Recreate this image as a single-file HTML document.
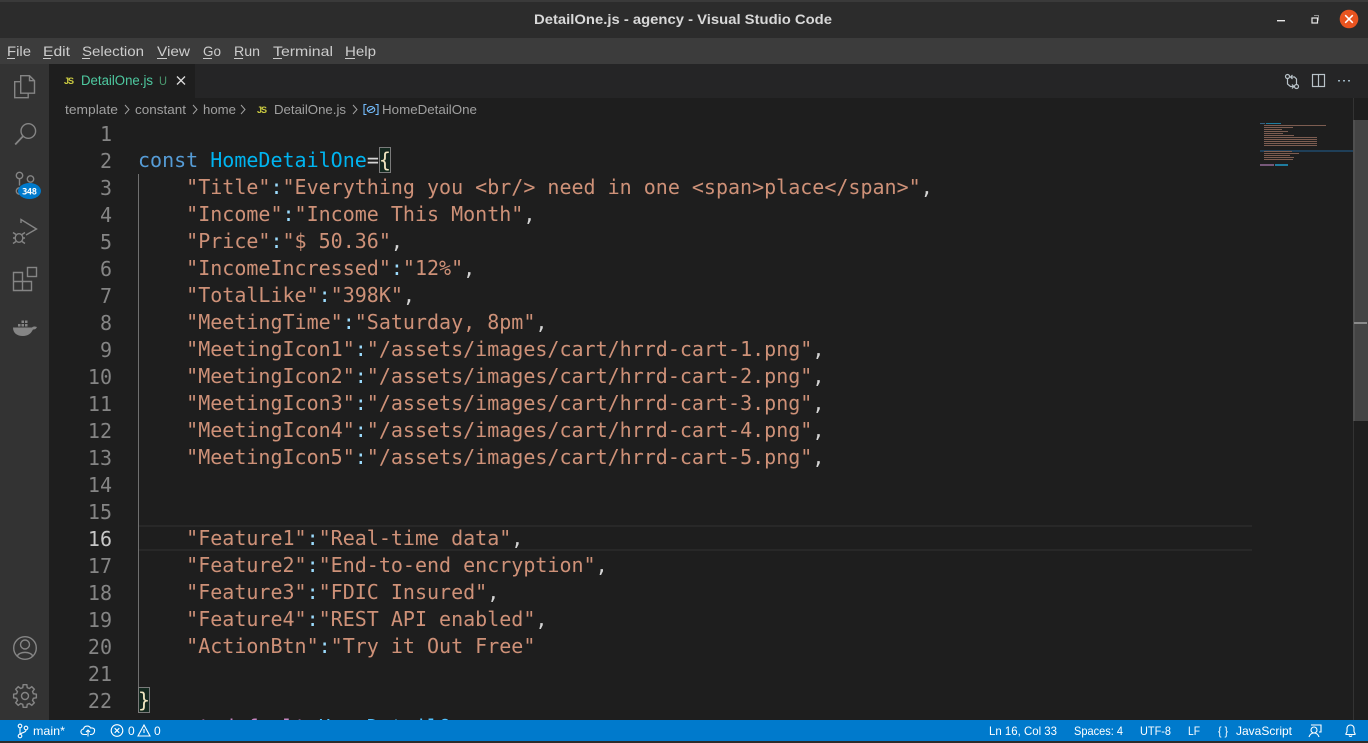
<!DOCTYPE html>
<html><head><meta charset="utf-8"><style>
html,body{margin:0;padding:0;background:#1e1e1e}
#w{position:relative;width:1368px;height:743px;overflow:hidden;background:#1e1e1e}
#w div{position:absolute}
.c{font-family:"DejaVu Sans Mono",monospace;font-size:20px;line-height:27px;white-space:pre;left:138px;color:#ce9178;height:27px}
.n{font-family:"DejaVu Sans Mono",monospace;font-size:20px;line-height:27px;left:62px;width:50px;text-align:right;color:#858585;height:27px;margin-top:1px}
.g{color:#d4d4d4}.b{color:#9cdcfe}
svg{position:absolute;left:0;top:0}
text{font-family:"Liberation Sans",sans-serif}
</style></head><body><div id="w">
<div style="left:0;top:0;width:1368px;height:39px;background:#2c2c2c"></div>
<div style="left:0;top:0;width:1368px;height:2px;background:#3a3a3a"></div>
<div style="left:0;top:38px;width:1368px;height:26px;background:#3c3c3c"></div>
<div style="left:0;top:64px;width:49px;height:656px;background:#333"></div>
<div style="left:49px;top:64px;width:1319px;height:34px;background:#252526"></div>
<div style="left:49px;top:64px;width:146px;height:34px;background:#1e1e1e"></div>
<div style="left:139px;top:525px;width:1113px;height:26px;border-top:2px solid #282828;border-bottom:2px solid #282828;box-sizing:border-box"></div>
<div style="left:138px;top:174px;width:1px;height:513px;background:#707070"></div>
<div style="left:379px;top:147px;width:10px;height:24px;background:#14291f;border:1px solid #7b7b7b"></div>
<div style="left:138px;top:687px;width:10px;height:24px;background:#14291f;border:1px solid #7b7b7b"></div>

<div class="n" style="top:120px">1</div><div class="n" style="top:147px">2</div><div class="n" style="top:174px">3</div><div class="n" style="top:201px">4</div><div class="n" style="top:228px">5</div><div class="n" style="top:255px">6</div><div class="n" style="top:282px">7</div><div class="n" style="top:309px">8</div><div class="n" style="top:336px">9</div><div class="n" style="top:363px">10</div><div class="n" style="top:390px">11</div><div class="n" style="top:417px">12</div><div class="n" style="top:444px">13</div><div class="n" style="top:471px">14</div><div class="n" style="top:498px">15</div><div class="n" style="top:525px;color:#c6c6c6">16</div><div class="n" style="top:552px">17</div><div class="n" style="top:579px">18</div><div class="n" style="top:606px">19</div><div class="n" style="top:633px">20</div><div class="n" style="top:660px">21</div><div class="n" style="top:687px">22</div>

<div class="c" style="top:147px"><span style="color:#569cd6">const</span> <span style="color:#00b4f0">HomeDetailOne</span><span class="g">=</span><span style="color:#efe6c0">{</span></div>
<div class="c" style="top:174px">    "Title"<span class="b">:</span>"Everything you &lt;br/&gt; need in one &lt;span&gt;place&lt;/span&gt;"<span class="g">,</span></div>
<div class="c" style="top:201px">    "Income"<span class="b">:</span>"Income This Month"<span class="g">,</span></div>
<div class="c" style="top:228px">    "Price"<span class="b">:</span>"$ 50.36"<span class="g">,</span></div>
<div class="c" style="top:255px">    "IncomeIncressed"<span class="b">:</span>"12%"<span class="g">,</span></div>
<div class="c" style="top:282px">    "TotalLike"<span class="b">:</span>"398K"<span class="g">,</span></div>
<div class="c" style="top:309px">    "MeetingTime"<span class="b">:</span>"Saturday, 8pm"<span class="g">,</span></div>
<div class="c" style="top:336px">    "MeetingIcon1"<span class="b">:</span>"/assets/images/cart/hrrd-cart-1.png"<span class="g">,</span></div>
<div class="c" style="top:363px">    "MeetingIcon2"<span class="b">:</span>"/assets/images/cart/hrrd-cart-2.png"<span class="g">,</span></div>
<div class="c" style="top:390px">    "MeetingIcon3"<span class="b">:</span>"/assets/images/cart/hrrd-cart-3.png"<span class="g">,</span></div>
<div class="c" style="top:417px">    "MeetingIcon4"<span class="b">:</span>"/assets/images/cart/hrrd-cart-4.png"<span class="g">,</span></div>
<div class="c" style="top:444px">    "MeetingIcon5"<span class="b">:</span>"/assets/images/cart/hrrd-cart-5.png"<span class="g">,</span></div>
<div class="c" style="top:525px">    "Feature1"<span class="b">:</span>"Real-time data"<span class="g">,</span></div>
<div class="c" style="top:552px">    "Feature2"<span class="b">:</span>"End-to-end encryption"<span class="g">,</span></div>
<div class="c" style="top:579px">    "Feature3"<span class="b">:</span>"FDIC Insured"<span class="g">,</span></div>
<div class="c" style="top:606px">    "Feature4"<span class="b">:</span>"REST API enabled"<span class="g">,</span></div>
<div class="c" style="top:633px">    "ActionBtn"<span class="b">:</span>"Try it Out Free"</div>
<div class="c" style="top:687px"><span style="color:#efe6c0">}</span></div>
<div class="c" style="top:714px"><span style="color:#c586c0">export default</span> <span style="color:#4fc1ff">HomeDetailOne</span></div>

<div style="left:1353px;top:98px;width:1px;height:622px;background:#333"></div>
<div style="left:1353px;top:120px;width:15px;height:301px;background:#444"></div>
<div style="left:1353px;top:120px;width:2px;height:301px;background:#4f4f4f"></div>
<div style="left:1354px;top:322px;width:13px;height:2px;background:#8a8a8a"></div>
<div style="left:0;top:720px;width:1368px;height:21px;background:#007acc"></div>
<div style="left:0;top:741px;width:1368px;height:2px;background:#2c2c2c"></div>

<svg width="1368" height="743" viewBox="0 0 1368 743">
<!-- minimap -->
<rect x="1260" y="150" width="93" height="2" fill="#1f3f58"/>
<g fill="#7d5d51" shape-rendering="crispEdges">
<rect x="1260" y="123" width="5" height="1" fill="#35607f"/><rect x="1266" y="123" width="15" height="1" fill="#1f7c9f"/>
<rect x="1264" y="125" width="62" height="1"/><rect x="1264" y="127" width="29" height="1"/><rect x="1264" y="129" width="18" height="1"/><rect x="1264" y="131" width="24" height="1"/><rect x="1264" y="133" width="19" height="1"/><rect x="1264" y="135" width="30" height="1"/>
<rect x="1264" y="137" width="53" height="1"/><rect x="1264" y="139" width="53" height="1"/><rect x="1264" y="141" width="53" height="1"/><rect x="1264" y="143" width="53" height="1"/><rect x="1264" y="145" width="53" height="1"/>
<rect x="1264" y="151" width="28" height="1"/><rect x="1264" y="153" width="35" height="1"/><rect x="1264" y="155" width="26" height="1"/><rect x="1264" y="157" width="30" height="1"/><rect x="1264" y="159" width="29" height="1"/>
<rect x="1260" y="164" width="14" height="2" fill="#76587a"/><rect x="1275" y="164" width="13" height="2" fill="#1f7c9f"/>
</g>

<!-- title and menu -->
<text x="534" y="24" font-size="14" font-weight="700" fill="#d8d8d8" textLength="298" lengthAdjust="spacingAndGlyphs">DetailOne.js - agency - Visual Studio Code</text>
<g font-size="14" fill="#cccccc">
<text x="7" y="56" textLength="24" lengthAdjust="spacingAndGlyphs">File</text>
<text x="43" y="56" textLength="27" lengthAdjust="spacingAndGlyphs">Edit</text>
<text x="82" y="56" textLength="62" lengthAdjust="spacingAndGlyphs">Selection</text>
<text x="157" y="56" textLength="33" lengthAdjust="spacingAndGlyphs">View</text>
<text x="203" y="56" textLength="18" lengthAdjust="spacingAndGlyphs">Go</text>
<text x="234" y="56" textLength="26" lengthAdjust="spacingAndGlyphs">Run</text>
<text x="273" y="56" textLength="60" lengthAdjust="spacingAndGlyphs">Terminal</text>
<text x="345" y="56" textLength="31" lengthAdjust="spacingAndGlyphs">Help</text>
</g>
<g fill="#cccccc" shape-rendering="crispEdges">
<rect x="7" y="58" width="8" height="1"/><rect x="43" y="58" width="8" height="1"/><rect x="82" y="58" width="8" height="1"/><rect x="157" y="58" width="10" height="1"/><rect x="203" y="58" width="9" height="1"/><rect x="234" y="58" width="9" height="1"/><rect x="273" y="58" width="9" height="1"/><rect x="345" y="58" width="10" height="1"/>
</g>
<!-- window buttons -->
<rect x="1277" y="20" width="8" height="1.4" fill="#e8e8e8"/>
<rect x="1312" y="18" width="5.500" height="5" fill="none" stroke="#e8e8e8" stroke-width="1.200"/>
<path d="M1314 15.500h4.500v5" fill="none" stroke="#8f8f8f"/>
<circle cx="1349" cy="19" r="9.300" fill="#e95420"/>
<path d="M1345.200 15.200l7.600 7.600M1352.800 15.200l-7.600 7.600" stroke="#fff" stroke-width="1.500"/>

<!-- activity icons -->
<g fill="none" stroke="#858585" stroke-width="1.400">
<path d="M20.700 75.700h8.800l5 5v12.500h-13.800zM29.500 75.700v5h5"/>
<path d="M20.700 81.700h-6v16h13.500v-4.500"/>
<circle cx="28.300" cy="131" r="7.300"/><path d="M23 136.300l-7.800 8.200" stroke-width="1.800"/>
<circle cx="19.500" cy="175.500" r="3.200"/><circle cx="30.500" cy="179" r="3.200"/><path d="M19.500 178.500v7"/><circle cx="19.500" cy="191" r="3.200"/>
<path d="M21 223v-3.500l15.500 9.500-10.500 6"/>
<ellipse cx="19" cy="238" rx="3.800" ry="4.300"/><path d="M13 232.500l3 2M25 232.500l-3 2M13 238h2M23 238h2M13 243.500l3-2M25 243.500l-3-2"/>
<path d="M13.500 272.500h9v9h9v9h-18zM13.500 281.500h9v9"/><rect x="27.500" y="267.500" width="9" height="9"/>
<circle cx="25" cy="648" r="11.300"/><circle cx="25" cy="644.500" r="4.500"/><path d="M17 656.500c2-5.500 14-5.500 16 0"/>
<circle cx="25" cy="696" r="3.500"/>
<path transform="translate(25 696)" d="M-2.250-8.400L-1.800-11.360L1.800-11.360L2.250-8.400L4.350-7.530L6.760-9.300L9.300-6.760L7.530-4.350L8.400-2.250L11.360-1.800L11.360 1.800L8.400 2.250L7.530 4.350L9.300 6.760L6.760 9.300L4.350 7.530L2.250 8.400L1.800 11.360L-1.800 11.360L-2.250 8.400L-4.350 7.530L-6.760 9.300L-9.300 6.760L-7.530 4.350L-8.400 2.250L-11.360 1.800L-11.360-1.800L-8.400-2.250L-7.530-4.350L-9.300-6.760L-6.760-9.300L-4.350-7.530Z"/>
</g>
<path d="M13 327.500h19c1-1 2-1.500 5-.5c-1 2-2 2.500-4 2.500c-2 4-5 6.500-10 6.500c-6 0-10-3-10-8.500z" fill="#858585"/>
<g fill="#858585"><rect x="18" y="324" width="2.500" height="2.500"/><rect x="21.500" y="324" width="2.500" height="2.500"/><rect x="25" y="324" width="2.500" height="2.500"/><rect x="21.500" y="320.500" width="2.500" height="2.500"/><rect x="25" y="320.500" width="2.500" height="2.500"/></g>
<ellipse cx="29.500" cy="191" rx="11.500" ry="8" fill="#007acc"/>
<text x="22" y="194.500" font-size="9" font-weight="700" fill="#fff" style='font-family:"DejaVu Sans Mono",monospace' textLength="15">348</text>

<!-- tab -->
<g>
<text x="64" y="84" font-size="9" font-weight="700" fill="#cbcb41" textLength="10">JS</text>
<text x="81" y="85" font-size="13.500" fill="#4ec9a0" textLength="72" lengthAdjust="spacingAndGlyphs">DetailOne.js</text>
<text x="159" y="85" font-size="12" fill="#4b9a70" textLength="8" lengthAdjust="spacingAndGlyphs">U</text>
</g>
<path d="M177 76.500l8 8M185 76.500l-8 8" stroke="#dcdcdc" stroke-width="1.300"/>
<!-- editor actions -->
<g fill="none" stroke="#b9c3c9" stroke-width="1.200">
<circle cx="1287.500" cy="76.500" r="2"/><circle cx="1296.500" cy="86.500" r="2"/>
<path d="M1287.500 79v5l3 2.500h3.500M1296.500 84v-5l-2-2h-4M1292.500 75l-2 2 2 2M1292 84.500l2 2-2 2"/>
<rect x="1312.500" y="74.500" width="12" height="12"/><path d="M1318.500 74.500v12"/>
</g>
<g fill="#9cb2bf"><rect x="1338" y="80" width="2" height="1.500"/><rect x="1343" y="80" width="2" height="1.500"/><rect x="1348" y="80" width="2" height="1.500"/></g>

<!-- breadcrumb -->
<g font-size="13" fill="#a0a0a0">
<text x="65" y="114" textLength="53" lengthAdjust="spacingAndGlyphs">template</text>
<text x="135" y="114" textLength="51" lengthAdjust="spacingAndGlyphs">constant</text>
<text x="203" y="114" textLength="33" lengthAdjust="spacingAndGlyphs">home</text>
<text x="274" y="114" textLength="72" lengthAdjust="spacingAndGlyphs">DetailOne.js</text>
<text x="382" y="114" textLength="95" lengthAdjust="spacingAndGlyphs">HomeDetailOne</text>
</g>
<text x="257" y="113" font-size="9" font-weight="700" fill="#cbcb41" textLength="10">JS</text>
<g fill="none" stroke="#a0a0a0" stroke-width="1"><path d="M125 105l4 4.500-4 4.500M193 105l4 4.500-4 4.500M241 105l4 4.500-4 4.500M353 105l4 4.500-4 4.500"/></g>
<g fill="none" stroke="#75beff" stroke-width="1.100"><path d="M366.500 104.500h-2.500v10h2.500M375.500 104.500h2.500v10h-2.500"/><ellipse cx="371" cy="109.500" rx="3.800" ry="3"/><path d="M368.500 111l5-3"/></g>

<!-- status bar -->
<g font-size="12" fill="#ffffff">
<text x="33" y="735" textLength="32" lengthAdjust="spacingAndGlyphs">main*</text>
<text x="128" y="735">0</text><text x="154" y="735">0</text>
<text x="989" y="735" textLength="68" lengthAdjust="spacingAndGlyphs">Ln 16, Col 33</text>
<text x="1074" y="735" textLength="49" lengthAdjust="spacingAndGlyphs">Spaces: 4</text>
<text x="1140" y="735" textLength="31" lengthAdjust="spacingAndGlyphs">UTF-8</text>
<text x="1188" y="735" textLength="12" lengthAdjust="spacingAndGlyphs">LF</text>
<text x="1218" y="735" textLength="10" lengthAdjust="spacingAndGlyphs">{ }</text>
<text x="1236" y="735" textLength="56" lengthAdjust="spacingAndGlyphs">JavaScript</text>
</g>
<g fill="none" stroke="#fff" stroke-width="1.100">
<circle cx="20" cy="726" r="1.800"/><circle cx="20" cy="736" r="1.800"/><circle cx="26" cy="728" r="1.800"/><path d="M20 728v6M26 730c0 3-4 2-5.500 4"/>
<path d="M87 735h-3c-4 0-4-5-.5-5.500c1-4 6-3.500 7-1c3-.5 4.500 1 4 3c0 2-1.500 3.500-3.500 3.500h-1M88 737v-6M86 732.500l2-2 2 2" transform="translate(0 -.5)"/>
<circle cx="117" cy="730.500" r="5.800"/><path d="M114.700 728.200l4.600 4.600M119.300 728.200l-4.600 4.600"/>
<path d="M144 725l6 11h-12zM144 729v4"/>
<circle cx="1314" cy="730" r="3"/><path d="M1309 737c1-3 3-4 5-4s4 1 5 4M1311 725h10v7h-2"/>
<path d="M1346 733.500c1.500-1.500 1-3 1-5c0-2 1.500-3.500 3.500-3.500s3.500 1.500 3.500 3.500c0 2-.5 3.500 1 5v1h-9zM1349 735.500c.5 1.300 2.500 1.300 3 0"/>
</g>
</svg>
</div></body></html>
